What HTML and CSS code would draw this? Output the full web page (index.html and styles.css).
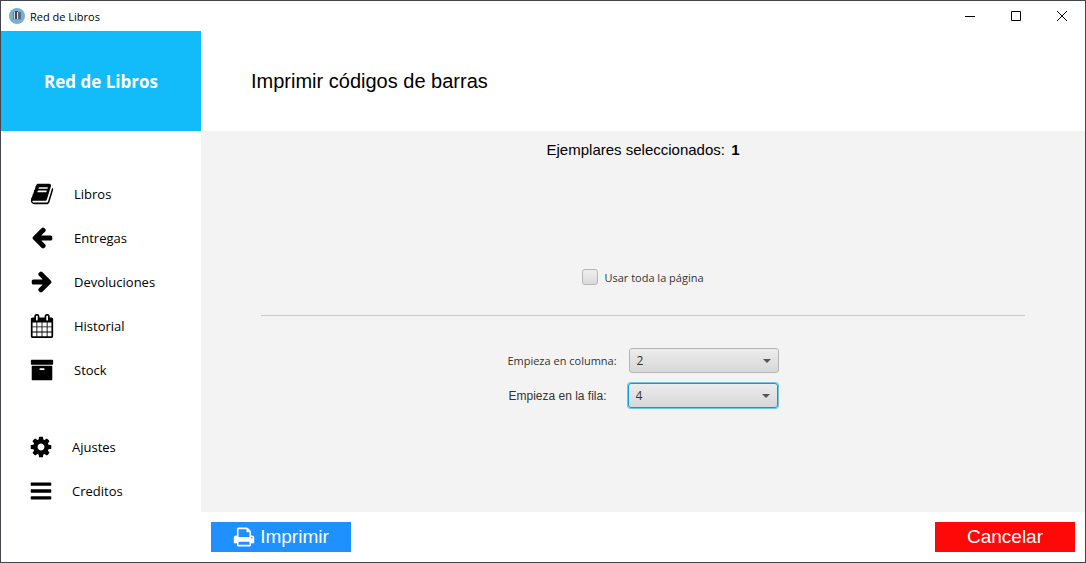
FILE: index.html
```html
<!DOCTYPE html>
<html lang="es">
<head>
<meta charset="utf-8">
<title>Red de Libros</title>
<link rel="stylesheet" href="styles.css">
</head>
<body>
<div class="window">
  <header class="titlebar">
    <svg class="app-icon" viewBox="0 0 16 16" aria-hidden="true">
      <circle cx="8" cy="8" r="8" fill="#76b1d3"/>
      <path d="M3 11h10v1H3z" fill="#d87f5c"/>
      <path d="M4 4h2v7H4z" fill="#c95b45"/>
      <path d="M5 4h1v7H5z" fill="#e8d5c4"/>
      <path d="M6 3h3v8H6z" fill="#3b4650"/>
      <path d="M8 4h1v7H8z" fill="#f0e4cf"/>
      <path d="M9 4h3v7H9z" fill="#546d7e"/>
    </svg>
    <span class="titlebar-text">Red de Libros</span>
    <div class="window-controls">
      <button class="window-button" type="button" aria-label="Minimizar"><svg viewBox="0 0 12 12"><path d="M1 6.500h10"/></svg></button>
      <button class="window-button" type="button" aria-label="Maximizar"><svg viewBox="0 0 12 12"><path d="M1.500 1.500h9v9h-9z"/></svg></button>
      <button class="window-button" type="button" aria-label="Cerrar"><svg viewBox="0 0 12 12"><path d="M1 1l10 10M11 1L1 11"/></svg></button>
    </div>
  </header>
  <div class="app">
    <aside class="sidebar">
      <div class="brand">Red de Libros</div>
      <nav class="menu">
        <a class="menu-item" href="#libros"><svg class="icon" viewBox="0 0 1792 1792" aria-hidden="true"><path d="M1703 478q40 57 18 129l-275 906q-19 64-76.500 107.500t-122.500 43.500h-923q-77 0-148.500-53.500t-99.500-131.500q-24-67-2-127 0-4 3-27t4-37q1-8-3-21.500t-3-19.500q2-11 8-21t16.500-23.500 16.500-23.500q23-38 45-91.500t30-91.500q3-10 .5-30t-.5-28q3-11 17-28t17-23q21-36 42-92t25-90q1-9-2.500-32t.5-28q4-13 22-30.500t22-22.500q19-26 42.500-84.500t27.500-96.500q1-8-3-25.500t-2-26.500q2-8 9-18t18-23 17-21q8-12 16.500-30.500t15-35 16-36 19.500-32 26.500-23.500 36-11.500 47.500 5.500l-1 3q38-9 51-9h761q74 0 114 56t18 130l-274 906q-36 119-71.500 153.500t-128.500 34.500h-869q-27 0-38 15-11 16-1 43 24 70 144 70h923q29 0 56-15.500t35-41.500l300-987q7-22 5-57 38 15 59 43zm-1064 2q-4 13 2 22.500t20 9.500h608q13 0 25.500-9.500t16.500-22.500l21-64q4-13-2-22.500t-20-9.500h-608q-13 0-25.500 9.500t-16.500 22.500zm-83 256q-4 13 2 22.500t20 9.500h608q13 0 25.500-9.500t16.500-22.500l21-64q4-13-2-22.500t-20-9.500h-608q-13 0-25.500 9.500t-16.500 22.500z"/></svg>Libros</a>
        <a class="menu-item" href="#entregas"><svg class="icon" viewBox="0 0 1792 1792" aria-hidden="true"><path d="M1664 832v128q0 53-32.500 90.500t-84.500 37.500h-704l293 294q38 36 38 90t-38 90l-75 76q-37 37-90 37-52 0-91-37l-651-652q-37-37-37-90 0-52 37-91l651-650q38-38 91-38 52 0 90 38l75 74q38 38 38 91t-38 91l-293 293h704q52 0 84.500 37.500t32.500 90.500z"/></svg>Entregas</a>
        <a class="menu-item" href="#devoluciones"><svg class="icon" viewBox="0 0 1792 1792" aria-hidden="true"><path d="M1600 896q0 54-37 91l-651 651q-39 37-91 37-51 0-90-37l-75-75q-38-38-38-91t38-91l293-293h-704q-52 0-84.500-37.500t-32.500-90.500v-128q0-53 32.500-90.500t84.500-37.500h704l-293-294q-38-36-38-90t38-90l75-75q38-38 90-38 53 0 91 38l651 651q37 35 37 90z"/></svg>Devoluciones</a>
        <a class="menu-item" href="#historial"><svg class="icon" viewBox="0 0 1792 1792" aria-hidden="true"><path d="M192 1664h288v-288h-288v288zm352 0h320v-288h-320v288zm-352-352h288v-320h-288v320zm352 0h320v-320h-320v320zm-352-384h288v-288h-288v288zm736 736h320v-288h-320v288zm-384-736h320v-288h-320v288zm768 736h288v-288h-288v288zm-384-352h320v-320h-320v320zm-352-864v-288q0-13-9.500-22.500t-22.500-9.500h-64q-13 0-22.500 9.500t-9.500 22.500v288q0 13 9.500 22.500t22.500 9.500h64q13 0 22.500-9.500t9.500-22.500zm736 864h288v-320h-288v320zm-384-384h320v-288h-320v288zm384 0h288v-288h-288v288zm32-480v-288q0-13-9.500-22.500t-22.500-9.500h-64q-13 0-22.500 9.500t-9.500 22.500v288q0 13 9.500 22.500t22.500 9.500h64q13 0 22.500-9.500t9.500-22.500zm384-64v1280q0 52-38 90t-90 38h-1408q-52 0-90-38t-38-90v-1280q0-52 38-90t90-38h128v-96q0-66 47-113t113-47h64q66 0 113 47t47 113v96h384v-96q0-66 47-113t113-47h64q66 0 113 47t47 113v96h128q52 0 90 38t38 90z"/></svg>Historial</a>
        <a class="menu-item" href="#stock"><svg class="icon" viewBox="0 0 1792 1792" aria-hidden="true"><path d="M1088 832q0-26-19-45t-45-19h-256q-26 0-45 19t-19 45 19 45 45 19h256q26 0 45-19t19-45zm576-192v960q0 26-19 45t-45 19h-1408q-26 0-45-19t-19-45v-960q0-26 19-45t45-19h1408q26 0 45 19t19 45zm64-448v256q0 26-19 45t-45 19h-1536q-26 0-45-19t-19-45v-256q0-26 19-45t45-19h1536q26 0 45 19t19 45z"/></svg>Stock</a>
      </nav>
      <nav class="menu menu-secondary">
        <a class="menu-item" href="#ajustes"><svg class="icon" viewBox="0 0 1792 1792" aria-hidden="true"><path d="M1152 896q0-106-75-181t-181-75-181 75-75 181 75 181 181 75 181-75 75-181zm512-109v222q0 12-8 23t-20 13l-185 28q-19 54-39 91 35 50 107 138 10 12 10 25t-9 23q-27 37-99 108t-94 71q-12 0-26-9l-138-108q-44 23-91 38-16 136-29 186-7 28-36 28h-222q-14 0-24.500-8.500t-11.500-21.500l-28-184q-49-16-90-37l-141 107q-10 9-25 9-14 0-25-11-126-114-165-168-7-10-7-23 0-12 8-23 15-21 51-66.500t54-70.500q-27-50-41-99l-183-27q-13-2-21-12.500t-8-23.500v-222q0-12 8-23t19-13l186-28q14-46 39-92-40-57-107-138-10-12-10-24 0-10 9-23 26-36 98.500-107.500t94.500-71.500q13 0 26 10l138 107q44-23 91-38 16-136 29-186 7-28 36-28h222q14 0 24.500 8.500t11.500 21.500l28 184q49 16 90 37l142-107q9-9 24-9 13 0 25 10 129 119 165 170 7 8 7 22 0 12-8 23-15 21-51 66.500t-54 70.500q26 50 41 98l183 28q13 2 21 12.500t8 23.500z"/></svg>Ajustes</a>
        <a class="menu-item" href="#creditos"><svg class="icon" viewBox="0 0 1792 1792" aria-hidden="true"><path d="M1664 1344v128q0 26-19 45t-45 19h-1408q-26 0-45-19t-19-45v-128q0-26 19-45t45-19h1408q26 0 45 19t19 45zm0-512v128q0 26-19 45t-45 19h-1408q-26 0-45-19t-19-45v-128q0-26 19-45t45-19h1408q26 0 45 19t19 45zm0-512v128q0 26-19 45t-45 19h-1408q-26 0-45-19t-19-45v-128q0-26 19-45t45-19h1408q26 0 45 19t19 45z"/></svg>Creditos</a>
      </nav>
    </aside>
    <main class="page">
      <h1 class="page-title">Imprimir códigos de barras</h1>
      <section class="content">
        <p class="summary">Ejemplares seleccionados: <strong class="count">1</strong></p>
        <label class="full-page"><input class="check" type="checkbox">Usar toda la página</label>
        <hr class="divider">
        <div class="field">
          <label for="columna">Empieza en columna:</label>
          <span class="combo"><select class="combo-select" id="columna"><option>1</option><option selected>2</option><option>3</option><option>4</option></select></span>
        </div>
        <div class="field field-row">
          <label for="fila">Empieza en la fila:</label>
          <span class="combo"><select class="combo-select is-focused" id="fila"><option>1</option><option>2</option><option>3</option><option selected>4</option></select></span>
        </div>
      </section>
      <footer class="actions">
        <button class="action action-print" type="button"><svg class="print-icon" viewBox="0 0 1792 1792" aria-hidden="true"><path d="M448 1536h896v-256h-896v256zm0-640h896v-384h-160q-40 0-68-28t-28-68v-160h-640v640zm1152 64q0-26-19-45t-45-19-45 19-19 45 19 45 45 19 45-19 19-45zm128 0v416q0 13-9.500 22.500t-22.500 9.500h-224v160q0 40-28 68t-68 28h-960q-40 0-68-28t-28-68v-160h-224q-13 0-22.500-9.500t-9.500-22.500v-416q0-79 56.500-135.500t135.500-56.500h64v-544q0-40 28-68t68-28h672q40 0 88 20t76 48l152 152q28 28 48 76t20 88v256h64q79 0 135.500 56.500t56.500 135.500z"/></svg>Imprimir</button>
        <button class="action action-cancel" type="button">Cancelar</button>
      </footer>
    </main>
  </div>
</div>
</body>
</html>
```

FILE: styles.css
```css
* {
  box-sizing: border-box;
}

body {
  margin: 0;
  font-family: "Open Sans", "Noto Sans", sans-serif;
  color: #000;
}

.window {
  display: flex;
  flex-direction: column;
  min-height: 100vh;
  background: #fff;
  border: 1px solid #42454f;
}

.titlebar {
  display: flex;
  align-items: center;
  height: 30px;
  padding-left: 8px;
  font-size: 11px;
}

.app-icon {
  width: 16px;
  height: 16px;
  margin-right: 5px;
}

.window-controls {
  display: flex;
  height: 100%;
  margin-left: auto;
}

.window-button {
  display: grid;
  place-items: center;
  width: 46px;
  padding: 0;
  background: none;
  border: 0;
}

.window-button svg {
  width: 12px;
  height: 12px;
  fill: none;
  stroke: #000;
}

.app {
  display: flex;
  flex: 1;
}

.sidebar {
  flex: 0 0 200px;
}

.brand {
  display: grid;
  place-items: center;
  height: 100px;
  color: #fff;
  font-size: 17px;
  font-weight: 700;
  background: #12bcfb;
}

.menu {
  padding: 41px 0 0 29px;
}

.menu-secondary {
  padding: 33px 0 0 28px;
}

.menu-item {
  display: flex;
  align-items: center;
  gap: 20px;
  height: 44px;
  color: #000;
  font-size: 13px;
  text-decoration: none;
}

.menu-secondary .menu-item {
  gap: 19px;
}

.icon {
  width: 24px;
  height: 24px;
}

.page {
  display: flex;
  flex: 1;
  flex-direction: column;
  min-width: 0;
}

.page-title {
  display: flex;
  align-items: center;
  height: 100px;
  margin: 0;
  padding-left: 50px;
  font: 20px "Liberation Sans", Arial, sans-serif;
}

.content {
  display: flex;
  flex: 1;
  flex-direction: column;
  align-items: center;
  padding: 10px 60px;
  color: #333;
  font-size: 11px;
  background: #f3f3f3;
}

.summary {
  margin: 0 0 108px;
  color: #000;
  font: 15px/18px "Liberation Sans", Arial, sans-serif;
}

.count {
  margin-left: 2px;
}

.full-page {
  display: flex;
  align-items: center;
  gap: 6px;
  height: 20px;
}

.check {
  width: 16px;
  height: 16px;
  margin: 0;
  appearance: none;
  background: linear-gradient(#efefef, #dadada);
  border: 1px solid #b5b5b5;
  border-radius: 3px;
}

.divider {
  align-self: stretch;
  margin: 28px 0 32px;
  border: 0;
  border-top: 1px solid #c8c8c8;
}

.field {
  display: flex;
  align-items: center;
  gap: 12px;
  height: 25px;
  margin-bottom: 10px;
}

.field-row {
  gap: 21px;
  font-family: "Liberation Sans", Arial, sans-serif;
  font-size: 12px;
}

.combo {
  position: relative;
}

.combo::after {
  position: absolute;
  top: 11px;
  right: 8px;
  border: 4px solid transparent;
  border-top-color: #555;
  border-bottom: 0;
  content: "";
  pointer-events: none;
}

.combo-select {
  display: block;
  width: 150px;
  height: 25px;
  padding: 0 7px;
  color: #333;
  font: 12px "Open Sans", "Noto Sans", sans-serif;
  appearance: none;
  background: linear-gradient(#ececec, #d8d8d8);
  border: 1px solid #b5b5b5;
  border-radius: 3px;
}

.is-focused {
  border-color: #039ed3;
  box-shadow: 0 0 0 1px #6fc6e4;
}

.actions {
  display: flex;
  justify-content: space-between;
  padding: 10px;
}

.action {
  display: flex;
  align-items: center;
  justify-content: center;
  gap: 5px;
  width: 140px;
  height: 30px;
  padding: 0;
  color: #fff;
  font: 19px "Liberation Sans", Arial, sans-serif;
  border: 0;
}

.action-print {
  background: #1e90ff;
}

.action-cancel {
  background: #ff0808;
}

.print-icon {
  width: 22px;
  height: 22px;
  fill: currentColor;
}
```
